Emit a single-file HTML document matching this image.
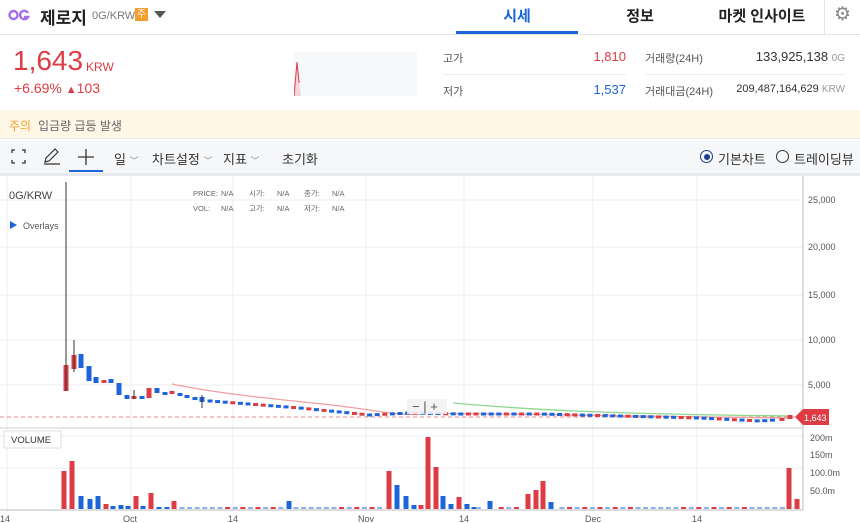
<!DOCTYPE html>
<html><head><meta charset="utf-8"><style>
*{margin:0;padding:0;box-sizing:border-box}
body{width:860px;height:523px;overflow:hidden;background:#fff;font-family:"Liberation Sans","Noto Sans CJK KR",sans-serif;color:#333;position:relative}
.a{position:absolute;white-space:nowrap}
</style></head><body>
<div class="a" style="left:0;top:0;width:860px;height:35px;border-bottom:1px solid #e3e5e8"></div>
<svg class="a" style="left:8px;top:8px" width="22" height="14" fill="none" stroke="#a46ee8" stroke-width="2.4"><circle cx="5.5" cy="7" r="4"/><path d="M20 5A4.2 4.2 0 1 0 20 9H16"/></svg>
<div class="a" style="left:40px;top:4px;font-size:17px;font-weight:bold;color:#222">제로지</div>
<div class="a" style="left:92px;top:10px;font-size:11px;color:#777">0G/KRW</div>
<div class="a" style="left:135px;top:8px;width:13px;height:13px;background:#f59c2b;color:#fff;font-size:10px;text-align:center;line-height:13px">주</div>
<div class="a" style="left:154px;top:11px;width:0;height:0;border-left:6px solid transparent;border-right:6px solid transparent;border-top:7px solid #555"></div>
<div class="a" style="left:456px;top:5px;width:122px;text-align:center;font-size:15px;font-weight:bold;color:#1b64da">시세</div>
<div class="a" style="left:456px;top:31px;width:122px;height:3px;background:#1b64da"></div>
<div class="a" style="left:580px;top:5px;width:120px;text-align:center;font-size:15px;font-weight:bold;color:#222">정보</div>
<div class="a" style="left:702px;top:5px;width:120px;text-align:center;font-size:15px;font-weight:bold;color:#222">마켓 인사이트</div>
<div class="a" style="left:824px;top:0;width:1px;height:34px;background:#e3e5e8"></div>
<div class="a" style="left:834px;top:3px;font-size:19px;color:#888">⚙</div>
<div class="a" style="left:13px;top:45px;font-size:28px;color:#dd3c44">1,643</div>
<div class="a" style="left:86px;top:60px;font-size:12px;color:#dd3c44">KRW</div>
<div class="a" style="left:14px;top:80px;font-size:14px;color:#dd3c44">+6.69% <span style="font-size:11px">▲</span>103</div>
<div class="a" style="left:294px;top:52px;width:123px;height:44px;background:#f7f8fa"></div>
<svg class="a" style="left:294px;top:52px" width="10" height="44"><path d="M0 44 L3 10 L5 30 L7 44Z" fill="#f5d5d7"/><path d="M0 44 L3 10 L5 30 L6 30" stroke="#dd3c44" fill="none"/></svg>
<div class="a" style="left:443px;top:50px;font-size:11px;color:#555">고가</div>
<div class="a" style="left:560px;top:49px;width:66px;text-align:right;font-size:13px;color:#dd3c44">1,810</div>
<div class="a" style="left:443px;top:74px;width:183px;height:1px;background:#eceef1"></div>
<div class="a" style="left:443px;top:83px;font-size:11px;color:#555">저가</div>
<div class="a" style="left:560px;top:82px;width:66px;text-align:right;font-size:13px;color:#1b64da">1,537</div>
<div class="a" style="left:645px;top:50px;font-size:11px;color:#555">거래량(24H)</div>
<div class="a" style="left:700px;top:49px;width:145px;text-align:right;font-size:13px;color:#333">133,925,138 <span style="font-size:10px;color:#999">0G</span></div>
<div class="a" style="left:645px;top:74px;width:200px;height:1px;background:#eceef1"></div>
<div class="a" style="left:645px;top:83px;font-size:11px;color:#555">거래대금(24H)</div>
<div class="a" style="left:700px;top:83px;width:145px;text-align:right;font-size:11px;color:#333">209,487,164,629 <span style="font-size:10px;color:#999">KRW</span></div>
<div class="a" style="left:0;top:110px;width:860px;height:29px;background:#fef7e6;border-bottom:1px solid #e8e8e8"></div>
<div class="a" style="left:9px;top:117px;font-size:12px;color:#f0a030">주의</div>
<div class="a" style="left:38px;top:117px;font-size:12px;color:#666">입금량 급등 발생</div>
<div class="a" style="left:0;top:140px;width:860px;height:33px;background:#f6f7f9"></div>
<div class="a" style="left:0;top:173px;width:860px;height:3px;background:#e8eaee"></div>
<svg class="a" style="left:10px;top:148px" width="20" height="18" fill="none" stroke="#333" stroke-width="1.3"><path d="M2 5V2H5M12 2H15V5M15 12V15H12M5 15H2V12"/></svg>
<svg class="a" style="left:42px;top:147px" width="20" height="20" fill="none" stroke="#333" stroke-width="1.2"><path d="M3 15L4 11L13 2L16 5L7 14Z M2 17H18"/></svg>
<svg class="a" style="left:77px;top:148px" width="18" height="18" stroke="#333" stroke-width="1.3"><path d="M9 1V17M1 9H17"/></svg>
<div class="a" style="left:69px;top:170px;width:34px;height:2px;background:#1b64da"></div>
<div class="a" style="left:114px;top:149px;font-size:13px;color:#333">일 <span style="font-size:9px;color:#888">﹀</span></div>
<div class="a" style="left:152px;top:149px;font-size:13px;color:#333">차트설정 <span style="font-size:9px;color:#888">﹀</span></div>
<div class="a" style="left:223px;top:149px;font-size:13px;color:#333">지표 <span style="font-size:9px;color:#888">﹀</span></div>
<div class="a" style="left:282px;top:149px;font-size:13px;color:#333">초기화</div>
<div class="a" style="left:700px;top:150px;width:13px;height:13px;border:1.5px solid #1b3f8a;border-radius:50%"></div>
<div class="a" style="left:703.5px;top:153.5px;width:6px;height:6px;background:#1b3f8a;border-radius:50%"></div>
<div class="a" style="left:718px;top:149px;font-size:13px;color:#333">기본차트</div>
<div class="a" style="left:776px;top:150px;width:13px;height:13px;border:1.3px solid #333;border-radius:50%"></div>
<div class="a" style="left:794px;top:149px;font-size:13px;color:#333">트레이딩뷰</div>
<svg class="a" style="left:0;top:176px" width="860" height="347" id="ch">
<g stroke="#eceef1" stroke-width="1">
<path d="M0 24H803M0 71H803M0 119H803M0 164H803M0 209H803M0 260H803M0 292H803"/>
<path d="M7 0V336M131 0V336M233 0V336M366 0V336M464 0V336M593 0V336M697 0V336"/>
</g>
<path d="M0 252H803" stroke="#ccc"/>
<path d="M803 0V334M0 334H803" stroke="#bbb"/>
<g font-size="9" fill="#555">
<text x="808" y="27">25,000</text><text x="808" y="74">20,000</text><text x="808" y="122">15,000</text><text x="808" y="167">10,000</text><text x="808" y="212">5,000</text>
<text x="810" y="265">200m</text><text x="810" y="282">150m</text><text x="810" y="300">100.0m</text><text x="810" y="318">50.0m</text>
<text x="0" y="346">14</text><text x="123" y="346">Oct</text><text x="228" y="346">14</text><text x="358" y="346">Nov</text><text x="459" y="346">14</text><text x="585" y="346">Dec</text><text x="692" y="346">14</text>
</g>
<text x="9" y="23" font-size="11" fill="#444">0G/KRW</text>
<path d="M10 45L17 49L10 53Z" fill="#1b64da"/><text x="23" y="53" font-size="9" fill="#555">Overlays</text>
<g font-size="7.5" fill="#666"><text x="193" y="20">PRICE:</text><text x="221" y="20">N/A</text><text x="249" y="20">시가:</text><text x="277" y="20">N/A</text><text x="304" y="20">종가:</text><text x="332" y="20">N/A</text>
<text x="193" y="35">VOL:</text><text x="221" y="35">N/A</text><text x="249" y="35">고가:</text><text x="277" y="35">N/A</text><text x="304" y="35">저가:</text><text x="332" y="35">N/A</text></g>
<rect x="4" y="255" width="57" height="17" fill="#fff" stroke="#ddd"/><text x="11" y="267" font-size="9.5" fill="#333">VOLUME</text>
<path d="M0 241H795" stroke="#e88" stroke-dasharray="4,3"/>
<path d="M172 208C230 220 300 225 340 230S400 240 420 238 600 240 790 242" stroke="#f0a0a0" stroke-width="1.3" fill="none"/>
<path d="M453 227C520 233 600 238 790 240" stroke="#8dd88d" stroke-width="1.3" fill="none"/>
<g id="cd"></g>
<rect x="407" y="223" width="40" height="15" fill="#f2f2f2" opacity=".9"/><text x="412" y="235" font-size="13" fill="#555">− | +</text>
<rect x="822" y="234" width="5" height="6" fill="#4caf50"/>
<path d="M795 241L803 233H829V249H803Z" fill="#dd3c44"/><text x="804" y="245" font-size="9" fill="#fff">1,643</text>
</svg>
<script>
var g=document.getElementById('cd'),h='';
var R='#dd3c44',B='#1b64da';
function c(x,y1,y2,col,w1,w2){y1-=176;y2-=176;h+='<rect x="'+(x-2.5)+'" y="'+y1+'" width="5" height="'+Math.max(2,y2-y1)+'" fill="'+col+'"/>';if(w1){h+='<path d="M'+x+' '+(w1-176)+'V'+(w2-176)+'" stroke="#333" stroke-width="1"/>';}}
function v(x,t,col){h+='<rect x="'+(x-2.5)+'" y="'+(t-176)+'" width="5" height="'+(509-t)+'" fill="'+col+'"/>';}
c(66,365,391,R,182,391);c(74,355,369,R,340,372);c(81,354,368,B);c(89,366,381,B);c(96,377,383,B);c(104,380,383,R);c(111,379,383,B);c(119,383,395,B);c(127,395,399,B);c(134,396,399,R,390,399);c(142,396,399,B);c(149,388,398,R);c(157,388,393,B);c(165,392,395,B);c(172,391,394,R);c(180,393,396,B);c(187,395,398,B);c(195,397,400,B);c(202,397,402,B,395,408);
var pts=[[210,401],[300,408],[370,415],[410,413],[460,414],[540,414],[620,416],[700,418],[760,421],[775,420]];
function py(x){for(var i=1;i<pts.length;i++)if(x<=pts[i][0]){var a=pts[i-1],b=pts[i];return a[1]+(b[1]-a[1])*(x-a[0])/(b[0]-a[0]);}return 420;}
var k=0;for(var x=210;x<778;x+=7.6){k++;var y=py(x);c(x,y-1.5,y+1.5,(k%4==0||k%7==0)?R:B);}
c(782,418,421,R);c(790,415,419,R);
[[64,471,R],[72,461,R],[81,496,B],[90,499,B],[98,496,B],[106,504,R],[113,506,B],[121,505,B],[128,506,B],[136,496,R],[143,506,B],[151,493,R],[159,507,B],[167,507,B],[174,501,R],[289,501,B],[389,471,R],[397,485,B],[406,496,B],[414,505,B],[421,505,R],[428,437,R],[436,467,R],[443,496,B],[451,504,B],[459,497,R],[467,504,B],[474,507,B],[490,501,B],[528,494,R],[536,490,R],[543,481,R],[551,502,B],[789,468,R],[797,499,R]].forEach(function(a){v(a[0],a[1],a[2]);});
for(var x=182;x<785;x+=7.6){var ok=true;[289,389,397,406,414,421,428,436,443,451,459,467,474,490,528,536,543,551].forEach(function(q){if(Math.abs(q-x)<4)ok=false;});if(ok)v(x,507,(Math.round(x)%3==0)?R:'#8fb0e8');}
g.innerHTML=h;
</script>
</body></html>
